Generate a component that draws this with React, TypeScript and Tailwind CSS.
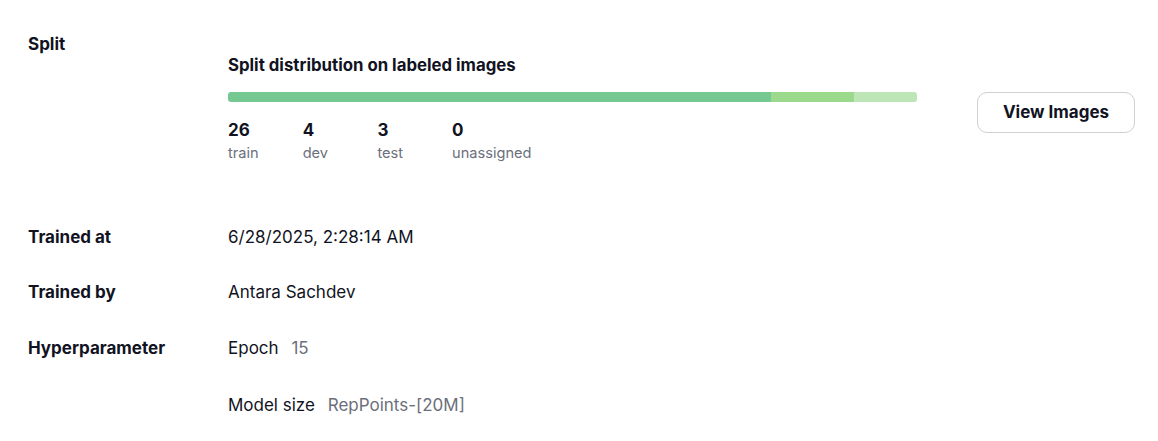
import React from "react";

const font = { fontFamily: "Inter, Lato, 'Noto Sans', sans-serif" };

function Stat({ n, label }: { n: string; label: string }) {
  return (
    <div className="w-[74.7px] shrink-0">
      <div className="text-[17px] leading-[24px] font-bold text-[#111322]">{n}</div>
      <div className="text-[14.6px] leading-[22px] text-[#6b6f7b]">{label}</div>
    </div>
  );
}

export default function App() {
  return (
    <div className="w-[1158px] h-[441px] bg-white pl-[28px] pt-[32px] text-[#111322]" style={font}>
      <div className="flex">
        <div className="w-[200px] shrink-0 text-[17px] leading-[24px] font-bold">Split</div>
        <div className="flex items-start">
          <div className="w-[689px] pt-[21px]">
            <div className="text-[16.8px] leading-[24px] font-bold">Split distribution on labeled images</div>
            <div className="mt-[15px] flex h-[10px] w-[689px] overflow-hidden rounded-[3px]">
              <div className="h-full w-[543px] bg-[#76c893]" />
              <div className="h-full w-[83px] bg-[#9bd98c]" />
              <div className="h-full flex-1 bg-[#bce6b5]" />
            </div>
            <div className="mt-[16px] flex">
              <Stat n="26" label="train" />
              <Stat n="4" label="dev" />
              <Stat n="3" label="test" />
              <Stat n="0" label="unassigned" />
            </div>
          </div>
          <button className="ml-[60px] mt-[60px] h-[41px] w-[158px] rounded-[10px] border border-[#cfcfd4] bg-white text-[17px] font-bold text-[#111322]">
            View Images
          </button>
        </div>
      </div>

      <div className="mt-[62px] flex h-[24px] items-center">
        <div className="w-[200px] shrink-0 text-[17px] font-bold">Trained at</div>
        <div className="text-[17px]">6/28/2025, 2:28:14 AM</div>
      </div>
      <div className="mt-[31px] flex h-[24px] items-center">
        <div className="w-[200px] shrink-0 text-[17px] font-bold">Trained by</div>
        <div className="text-[17px]">Antara Sachdev</div>
      </div>
      <div className="mt-[31px] flex items-start">
        <div className="w-[200px] shrink-0 text-[17px] leading-[24px] font-bold">Hyperparameter</div>
        <div className="flex flex-col gap-[33px]">
          <div className="text-[17px] leading-[24px]">
            Epoch <span className="ml-[8px] text-[#6b6f7b]">15</span>
          </div>
          <div className="text-[17px] leading-[24px]">
            Model size <span className="ml-[8px] text-[#6b6f7b]">RepPoints-[20M]</span>
          </div>
        </div>
      </div>
    </div>
  );
}
